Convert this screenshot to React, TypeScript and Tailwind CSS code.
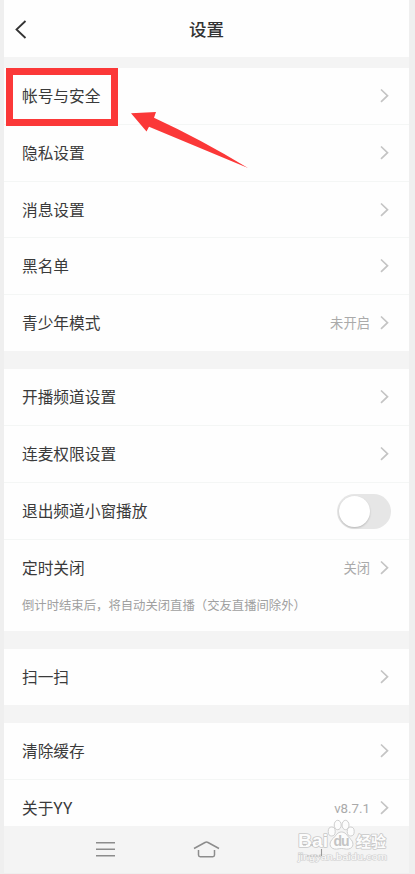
type RowProps = {
  label: string;
  value?: string;
  toggle?: boolean;
  last?: boolean;
  note?: string;
  className?: string;
};

function Chevron() {
  return (
    <svg width="11" height="16" viewBox="0 0 11 16" fill="none" className="mr-px ml-[9px] shrink-0" aria-hidden="true">
      <path d="M2 1.500l6.500 6.200L2 13.900" stroke="#c4c4c4" strokeWidth="1.700" />
    </svg>
  );
}

function Toggle() {
  return (
    <span role="switch" aria-checked="false" className="flex h-[35px] w-[54px] items-center rounded-full bg-[#e6e6e6] px-[2px]">
      <span className="size-[31px] rounded-full bg-white shadow-[0_1px_2px_rgba(0,0,0,0.2)]" />
    </span>
  );
}

function Row({ label, value, toggle, last, note, className = "h-[56.75px]" }: RowProps) {
  return (
    <div className={`${className} ${last ? "" : "border-b border-[#f4f6f5]"}`}>
      <div className="flex h-14 items-center pl-[18px] pr-[18px]">
        <span className="pt-[2px] text-[15.7px] leading-none text-[#3a3a3a]">{label}</span>
        <span className="ml-auto flex items-center">
          {value && <span className="pt-px text-[13.3px] leading-none text-[#aaa]">{value}</span>}
          {toggle ? <Toggle /> : <Chevron />}
        </span>
      </div>
      {note && <p className="pl-[18px] pt-px text-[12.35px] leading-[18px] text-[#a0a0a0]">{note}</p>}
    </div>
  );
}

function Watermark() {
  return (
    <svg width="96" height="48" viewBox="0 0 96 48" className="absolute left-[296px] top-[818px]" aria-hidden="true">
      <g fill="#fcfcfc" stroke="#c8c8c8" strokeWidth="0.9">
        <ellipse cx="35.700" cy="13.500" rx="3.500" ry="4.500" />
        <ellipse cx="41.700" cy="7" rx="3.500" ry="4.700" />
        <ellipse cx="49.500" cy="7" rx="3.500" ry="4.700" />
        <ellipse cx="54.700" cy="13.500" rx="3.500" ry="4.500" />
        <path d="M45.500 14c-4 0-5 3-8 6-5 4-4.500 10 1 11 3 .5 4-.5 7-.5s4 1 7 .5c5.500-1 6-7 1-11-3-3-4-6-8-6z" />
      </g>
      <g
        fill="#fcfcfc"
        stroke="#c8c8c8"
        strokeWidth="1.600"
        paintOrder="stroke"
        strokeLinejoin="round"
        className="font-['Liberation_Sans','Noto_Sans_CJK_SC',sans-serif] font-bold"
      >
        <text x="2" y="29" fontSize="19" textLength="30" lengthAdjust="spacingAndGlyphs">Bai</text>
        <text x="60" y="28.500" fontSize="15" textLength="30">经验</text>
      </g>
      <text
        x="2"
        y="41.500"
        fontSize="9"
        fill="#fcfcfc"
        stroke="#d0d0d0"
        strokeWidth="1.200"
        paintOrder="stroke"
        textLength="89"
        lengthAdjust="spacingAndGlyphs"
        className="font-['Liberation_Sans',sans-serif]"
      >
        jingyan.baidu.com
      </text>
      <text x="37.500" y="28" fontSize="14" fill="#c4c4c4" textLength="16" className="font-['Liberation_Sans',sans-serif] font-bold">du</text>
      <path d="M11 38h14" stroke="#aaa" strokeWidth="1" strokeDasharray="1.500 1.500" />
      <path d="M25.500 38v-7" stroke="#999" strokeWidth="1.100" />
      <path d="M7 27h3M14 27h3" stroke="#aaa" strokeWidth="0.8" />
    </svg>
  );
}

export default function App() {
  return (
    <div className="relative h-[874px] w-[415px] overflow-hidden bg-[#efefef] pl-1 font-['Roboto','Noto_Sans_CJK_SC',sans-serif]">
      <main className="flex h-[873px] w-[405px] flex-col bg-[#f4f4f4]">
        <header className="grid h-[57px] shrink-0 grid-cols-[40px_1fr_40px] items-center bg-[#fefefe] pt-[3px]">
          <svg width="14" height="20" viewBox="0 0 14 20" fill="none" className="ml-[10px]" aria-hidden="true">
            <path d="M11.500 1L2.500 9.500l9 8.500" stroke="#333" strokeWidth="1.800" />
          </svg>
          <h1 className="pt-px text-center text-[17.5px] font-medium leading-none text-[#333]">设置</h1>
        </header>

        <section className="mt-[11px] h-[283px] shrink-0 bg-[#fefefe]">
          <Row label="帐号与安全" />
          <Row label="隐私设置" />
          <Row label="消息设置" />
          <Row label="黑名单" />
          <Row label="青少年模式" value="未开启" last />
        </section>

        <section className="mt-[18px] h-[262px] shrink-0 bg-[#fefefe]">
          <Row label="开播频道设置" className="h-[57px]" />
          <Row label="连麦权限设置" className="h-[57px]" />
          <Row label="退出频道小窗播放" className="h-[57px]" toggle />
          <Row
            label="定时关闭"
            value="关闭"
            note="倒计时结束后，将自动关闭直播（交友直播间除外）"
            className="h-[91px]"
            last
          />
        </section>

        <section className="mt-[18px] h-14 shrink-0 bg-[#fefefe]">
          <Row label="扫一扫" last />
        </section>

        <section className="mt-[18px] h-[103px] shrink-0 overflow-hidden bg-[#fefefe]">
          <Row label="清除缓存" className="h-[57px]" />
          <Row label="关于YY" value="v8.7.1" last />
        </section>

        <nav className="flex grow pl-[92px] pt-[14px]">
          <svg width="19" height="18" viewBox="0 0 19 18" aria-hidden="true">
            <path d="M0 2.700h19M0 9.200h19M0 15.700h19" stroke="#8c8c8c" strokeWidth="1.500" />
          </svg>
          <svg width="27" height="20" viewBox="0 0 27 20" fill="none" className="ml-[78px]" aria-hidden="true">
            <path
              d="M1 8.500l11-6q1.500-.8 3 0l11 6M5.500 10v5q0 1.700 1.700 1.700h12.600q1.700 0 1.700-1.700v-5"
              stroke="#8c8c8c"
              strokeWidth="1.500"
            />
          </svg>
        </nav>
      </main>

      <div className="absolute left-[6px] top-[68px] h-[58px] w-28 border-[7px] border-[#fb3838]" />
      <svg width="120" height="60" viewBox="0 0 120 60" className="absolute left-[130px] top-[110px]" aria-hidden="true">
        <path d="M1 3.300L26 2l-2 5.800Q70 29 118 58L19 16.700l-2.500 4.800z" fill="#fb3838" />
      </svg>
      <Watermark />
    </div>
  );
}
